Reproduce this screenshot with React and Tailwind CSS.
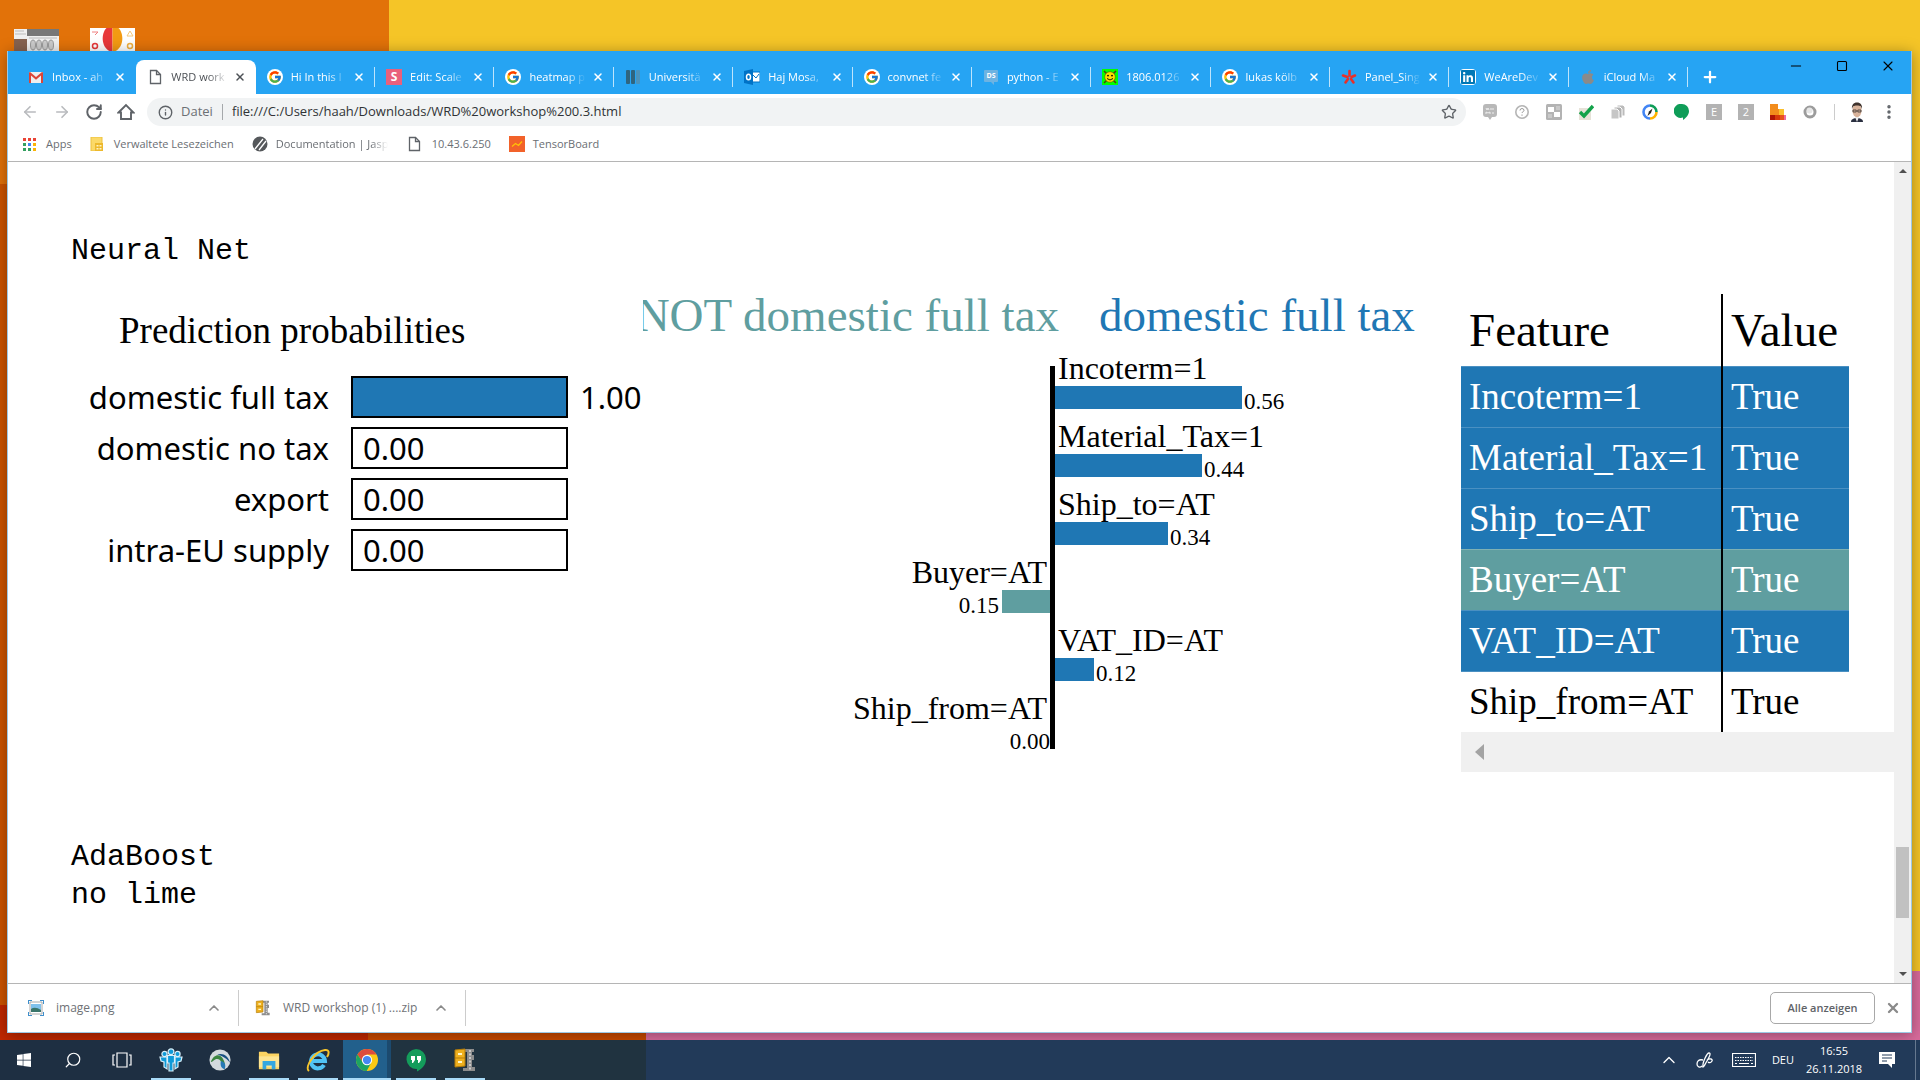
import {
    ArrowLeft,
    ArrowRight,
    ChevronUp,
    Info,
    Minus,
    MoreVertical,
    Plus,
    RotateCw,
    Search,
    Square,
    Star,
    X,
} from 'lucide-react';
import { FcGoogle } from 'react-icons/fc';
import { FaApple, FaLinkedin, FaWindows } from 'react-icons/fa';

const BLUE = '#1f77b4';
const TEAL = '#5f9ea0';

/* ---------- Favicons ---------- */

const PageIcon = () => (
    <svg viewBox="0 0 16 16" className="size-4" fill="none" stroke="#5f6368" strokeWidth="1.3">
        <path d="M3.5 1.5h6l4 4v9h-10z" />
        <path d="M9.5 1.5v4h4" />
    </svg>
);

const GmailIcon = () => (
    <svg viewBox="0 0 16 16" className="size-4">
        <rect x="1" y="3" width="14" height="11" rx="1" fill="#eee" />
        <path d="M1 14V3.5l1-.5 6 5 6-5 1 .5V14h-2V6.5L8 10.8 3 6.5V14z" fill="#db4437" />
    </svg>
);

const GoogleIcon = () => (
    <span className="flex size-4 items-center justify-center rounded-full bg-white">
        <FcGoogle className="size-[14px]" />
    </span>
);

const ScaledIcon = () => (
    <svg viewBox="0 0 16 16" className="size-4">
        <rect width="16" height="16" fill="#e9607c" />
        <text x="8" y="12" textAnchor="middle" fontSize="12" fontWeight="700" fill="#fff" fontFamily="Open Sans, sans-serif">S</text>
    </svg>
);

const UniIcon = () => (
    <svg viewBox="0 0 16 16" className="size-4" fill="#2f6580">
        <rect x="1" y="1" width="4" height="14" rx="1" />
        <rect x="6" y="1" width="4" height="14" rx="1" />
        <rect x="11" y="1" width="4" height="14" rx="1" fill="#4b93bd" />
    </svg>
);

const OutlookIcon = () => (
    <svg viewBox="0 0 16 16" className="size-4">
        <path d="M7 3h9v10H7z" fill="#fff" stroke="#0072c6" />
        <path d="M9 6l3 3 3-4" fill="none" stroke="#0072c6" />
        <path d="M0 2l9-2v16l-9-2z" fill="#0072c6" />
        <ellipse cx="4.5" cy="8" rx="2" ry="2.8" fill="none" stroke="#fff" strokeWidth="1.5" />
    </svg>
);

const StackIcon = () => (
    <svg viewBox="0 0 16 16" className="size-4">
        <path d="M1 2a1 1 0 011-1h12a1 1 0 011 1v10a1 1 0 01-1 1h-3v3l-3-3H2a1 1 0 01-1-1z" fill="#6db3e2" />
        <text x="8" y="9" textAnchor="middle" fontSize="7" fontWeight="700" fill="#fff" fontFamily="Open Sans, sans-serif">DS</text>
    </svg>
);

const ArxivIcon = () => (
    <svg viewBox="0 0 16 16" className="size-4">
        <rect width="16" height="16" fill="#0f0" />
        <path d="M2 2l12 12M14 2L2 14" stroke="#553a10" strokeWidth="1.5" />
        <circle cx="8" cy="8" r="5.3" fill="#fd0" stroke="#650" strokeWidth=".6" />
        <circle cx="6" cy="6.6" r=".9" />
        <circle cx="10" cy="6.6" r=".9" />
        <path d="M5 9.5q3 3 6 0" fill="none" stroke="#000" strokeWidth=".9" />
    </svg>
);

const YelpIcon = () => (
    <svg viewBox="0 0 16 16" className="size-4" stroke="#e8302a" strokeWidth="2.6" strokeLinecap="round">
        <path d="M8.500 2v4.500M2 6.500l4.500 1.500M4.500 13.500l2.500-3.500M10 10l2.500 3.500M10.500 8L14 6.500" />
    </svg>
);

const tabs = [
    { title: 'Inbox - ah', icon: <GmailIcon />, plain: true },
    { title: 'WRD work', icon: <PageIcon />, active: true },
    { title: 'Hi In this l', icon: <GoogleIcon /> },
    { title: 'Edit: Scale', icon: <ScaledIcon /> },
    { title: 'heatmap p', icon: <GoogleIcon /> },
    { title: 'Universitä', icon: <UniIcon /> },
    { title: 'Haj Mosa,', icon: <OutlookIcon /> },
    { title: 'convnet fe', icon: <GoogleIcon /> },
    { title: 'python - E', icon: <StackIcon /> },
    { title: '1806.0126', icon: <ArxivIcon /> },
    { title: 'lukas kölb', icon: <GoogleIcon /> },
    { title: 'Panel_Sing', icon: <YelpIcon /> },
    { title: 'WeAreDev', icon: <FaLinkedin className="size-4 rounded-sm bg-white text-[#0077b5]" /> },
    { title: 'iCloud Ma', icon: <FaApple className="size-4 text-[#8a8a8a]" /> },
];

const Tab = ({ title, icon, active, plain }) => (
    <div
        className={
            active
                ? 'flex min-w-0 flex-1 items-center rounded-t-lg bg-white pl-[11px] text-[#4d5156]'
                : 'flex min-w-0 flex-1 items-center pl-[11px] text-white'
        }
    >
        <span className="shrink-0">{icon}</span>
        <button
            type="button"
            className="ml-2 min-w-0 flex-1 text-left whitespace-nowrap [mask-image:linear-gradient(to_right,black_65%,transparent)]"
        >
            {title}
        </button>
        <button type="button" aria-label={`${title} schließen`} className="ml-1 flex size-4 shrink-0 items-center justify-center">
            <X className="size-3" strokeWidth={3} />
        </button>
        <span className={active || plain ? 'ml-[7px] h-5 w-px shrink-0' : 'ml-[7px] h-5 w-px shrink-0 bg-white/70'} />
    </div>
);

const TabStrip = () => (
    <div className="flex h-[43px] bg-[#26a4f3]">
        <div className="mt-[9px] flex min-w-0 flex-1 pl-[9px] text-[11px]">
            {tabs.map((tab, i) => (
                <Tab key={i} {...tab} />
            ))}
        </div>
        <button type="button" aria-label="Neuer Tab" className="mt-[9px] ml-[13px] text-white">
            <Plus className="size-[18px]" strokeWidth={3} />
        </button>
        <div className="ml-[54px] flex h-[30px] text-black">
            <button type="button" aria-label="Minimieren" className="flex w-[46px] items-center justify-center">
                <Minus className="size-4" strokeWidth={1.5} />
            </button>
            <button type="button" aria-label="Maximieren" className="flex w-[46px] items-center justify-center">
                <Square className="size-3" strokeWidth={2.2} />
            </button>
            <button type="button" aria-label="Schließen" className="flex w-[46px] items-center justify-center">
                <X className="size-4" strokeWidth={1.6} />
            </button>
        </div>
    </div>
);

/* ---------- Barre d'outils ---------- */

const extensions = [
    {
        name: 'WalkMe',
        icon: (
            <>
                <path d="M1 3a3 3 0 013-3h8a3 3 0 013 3v7a3 3 0 01-3 3h-2l-2 3-2-3H4a3 3 0 01-3-3z" fill="#b8b8b8" />
                <path d="M4 4l1 2 1-2 1 2M9 4v2M11 4v2M4 10V8l2 1 2-1v2M10 9h2" fill="none" stroke="#eee" />
            </>
        ),
    },
    {
        name: 'Hilfe',
        icon: (
            <>
                <circle cx="8" cy="8" r="6.2" fill="none" stroke="#b5b5b5" strokeWidth="1.6" />
                <path d="M6 6.5a2 2 0 114 0c0 1.2-2 1.2-2 2.5M8 10.5v1.3" fill="none" stroke="#999" />
            </>
        ),
    },
    {
        name: 'Fenster',
        icon: (
            <>
                <rect width="16" height="16" rx="1.5" fill="#b3b3b3" />
                <path d="M2 3h6v5H2zM8 8h6v5H8z" fill="#fff" />
                <path d="M10 2h4v4h-4zM2 10h4v4H2z" fill="#c8c8c8" />
            </>
        ),
    },
    {
        name: 'Prüfung',
        icon: (
            <>
                <rect x="1" y="4" width="12" height="12" fill="#e6e2d8" />
                <path d="M2 8l4 4L15 2" fill="none" stroke="#13a24a" strokeWidth="3.4" />
            </>
        ),
    },
    {
        name: 'Kopien',
        icon: (
            <>
                <path d="M7 1h6l2 2v9H7z" fill="#bbb" stroke="#fff" />
                <path d="M4 3h6l2 2v9H4z" fill="#b0b0b0" stroke="#fff" />
                <path d="M1 5h6l2 2v8H1z" fill="#c6c6c6" stroke="#fff" />
            </>
        ),
    },
    {
        name: 'Kompass',
        icon: (
            <>
                <path d="M8 1.5A6.5 6.5 0 0114.5 8" fill="none" stroke="#0f9d58" strokeWidth="2.6" />
                <path d="M14.5 8A6.5 6.5 0 018 14.5" fill="none" stroke="#ffb300" strokeWidth="2.6" />
                <path d="M8 14.5a6.5 6.5 0 010-13" fill="none" stroke="#4285f4" strokeWidth="2.6" />
                <path d="M10.5 4.5L9 9l-3.5 3L7 7.5z" fill="#222" />
            </>
        ),
    },
    { name: 'Hangouts', icon: <path d="M8 0a7 7 0 017 7c0 4-3 7-6 9v-2.5A7 7 0 118 0z" fill="#0f9d58" /> },
    {
        name: 'Erweiterung E',
        icon: (
            <>
                <rect width="16" height="16" fill="#b3b3b3" />
                <text x="8" y="12" textAnchor="middle" fontSize="11" fill="#fff">E</text>
            </>
        ),
    },
    {
        name: 'Erweiterung 2',
        icon: (
            <>
                <rect width="16" height="16" fill="#b3b3b3" />
                <text x="8" y="12" textAnchor="middle" fontSize="11" fill="#fff">2</text>
            </>
        ),
    },
    {
        name: 'Treppe',
        icon: (
            <>
                <path d="M0 0h8v5h6v6h2v5H0z" fill="#f28c1c" />
                <path d="M9 5h5v6H9z" fill="#fbc02d" />
                <path d="M0 11h5v5H0z" fill="#b01405" />
                <path d="M5 11h5v5H5z" fill="#d8390b" />
                <path d="M10 11h4v5h-4z" fill="#e8531a" />
                <path d="M14 11h2v5h-2z" fill="#ee6aa0" />
            </>
        ),
    },
    {
        name: 'Kreis',
        icon: (
            <>
                <circle cx="8" cy="8" r="5" fill="none" stroke="#9c9c9c" strokeWidth="3" />
                <circle cx="7.5" cy="6.500" r="3" fill="#e6e6e6" />
            </>
        ),
    },
];

const Toolbar = () => (
    <div className="flex h-9 items-center bg-white pr-[13px] pl-[13px]">
        <button type="button" aria-label="Zurück" className="mr-[14px] text-[#b9bbbe]">
            <ArrowLeft className="size-[18px]" strokeWidth={2.2} />
        </button>
        <button type="button" aria-label="Vorwärts" className="mr-[14px] text-[#b9bbbe]">
            <ArrowRight className="size-[18px]" strokeWidth={2.2} />
        </button>
        <button type="button" aria-label="Neu laden" className="mr-[14px] text-[#5f6368]">
            <RotateCw className="size-[18px]" strokeWidth={2.6} />
        </button>
        <button type="button" aria-label="Startseite" className="mr-3 text-[#5f6368]">
            <svg viewBox="0 0 18 18" className="size-[18px]" fill="none" stroke="currentColor" strokeWidth="1.9">
                <path d="M1.5 9.5L9 2l7.5 7.5H14V16H4V9.5z" />
            </svg>
        </button>
        <div className="flex h-7 min-w-0 flex-1 items-center rounded-full bg-[#f1f3f4] pr-[9px] pl-[11px]">
            <Info className="size-[15px] text-[#5f6368]" strokeWidth={2.2} />
            <span className="ml-2 text-[13px] text-[#6c7074]">Datei</span>
            <span className="mx-[9px] h-4 w-px bg-[#a5a8ab]" />
            <input
                aria-label="Adresse"
                defaultValue="file:///C:/Users/haah/Downloads/WRD%20workshop%200.3.html"
                className="min-w-0 flex-1 bg-transparent text-[13px] text-[#303336] outline-none"
            />
            <button type="button" aria-label="Lesezeichen setzen" className="text-[#5f6368]">
                <Star className="size-4" strokeWidth={2} />
            </button>
        </div>
        <div className="ml-4 flex gap-4">
            {extensions.map(({ name, icon }) => (
                <button key={name} type="button" aria-label={name}>
                    <svg viewBox="0 0 16 16" className="size-4">{icon}</svg>
                </button>
            ))}
        </div>
        <span className="ml-4 h-4 w-px bg-[#ccc]" />
        <button type="button" aria-label="Profil" className="ml-3">
            <svg viewBox="0 0 20 20" className="size-5">
                <path d="M4 20c0-3 3-4 6-4s6 1 6 4z" fill="#2a2f40" />
                <path d="M8 15h4l-2 5z" fill="#eee" />
                <ellipse cx="10" cy="8.5" rx="4.6" ry="6.8" fill="#d9b39b" />
                <path d="M5 7c-.5-4 1.5-6.500 5-6.500S15.500 3 15 7c-.6-2.500-1.500-3.500-5-3.500S5.600 4.500 5 7z" fill="#3f332d" />
                <path d="M6 8h3.2v2H6zM10.8 8H14v2h-3.2z" fill="none" stroke="#222" strokeWidth=".7" />
            </svg>
        </button>
        <button type="button" aria-label="Menü" className="ml-[13px] text-[#5f6368]">
            <MoreVertical className="size-[18px]" strokeWidth={2.6} />
        </button>
    </div>
);

const Bookmarks = () => (
    <nav className="flex h-8 items-center border-b border-[#b5b5b5] bg-white pb-[3px] pl-[15px] text-[11px] text-[#6a6e73]">
        <a href="#apps" className="flex items-center gap-[10px]">
            <svg viewBox="0 0 13 13" className="size-[13px]">
                <path d="M0 0h3v3H0zM5 0h3v3H5zM10 0h3v3h-3z" fill="#ea4335" />
                <path d="M0 5h3v3H0zM0 10h3v3H0zM5 10h3v3H5z" fill="#34a060" />
                <path d="M5 5h3v3H5z" fill="#4285f4" />
                <path d="M10 5h3v3h-3zM10 10h3v3h-3z" fill="#fbb305" />
            </svg>
            Apps
        </a>
        <a href="#verwaltet" className="ml-[18px] flex items-center gap-[10px]">
            <svg viewBox="0 0 14 14" className="size-[14px]">
                <path d="M1 0h11v14H1z" fill="#fbd968" stroke="#edc13c" />
                <path d="M5 6h8v8H5z" fill="#edb92c" />
                <path d="M6.5 8h2v1.5h-2zM9.5 8h2v1.5h-2zM6.5 11h2v1.5h-2zM9.5 11h2v1.5h-2z" fill="#fff3c4" />
            </svg>
            Verwaltete Lesezeichen
        </a>
        <a href="#docs" className="ml-[18px] flex items-center gap-2">
            <svg viewBox="0 0 16 16" className="size-4">
                <circle cx="8" cy="8" r="7.5" fill="#55585b" />
                <path d="M3 13L11 3M7 14l7-9" stroke="#fff" strokeWidth="1.3" />
            </svg>
            <span className="w-28 whitespace-nowrap [mask-image:linear-gradient(to_right,black_85%,transparent)]">
                Documentation | Jasp
            </span>
        </a>
        <a href="#ip" className="ml-[18px] flex items-center gap-[10px]">
            <PageIcon />
            10.43.6.250
        </a>
        <a href="#tensorboard" className="ml-[18px] flex items-center gap-2">
            <svg viewBox="0 0 16 16" className="size-4">
                <rect width="16" height="16" fill="#f2622a" />
                <path d="M3 10.5l3.5-3 3 2L13 5.5" fill="none" stroke="#ffc107" strokeWidth="1.3" />
            </svg>
            TensorBoard
        </a>
    </nav>
);

/* ---------- Contenu de la page ---------- */

const probabilities = [
    { label: 'domestic full tax', value: 1 },
    { label: 'domestic no tax', value: 0 },
    { label: 'export', value: 0 },
    { label: 'intra-EU supply', value: 0 },
];

const features = [
    { name: 'Incoterm=1', weight: 0.56 },
    { name: 'Material_Tax=1', weight: 0.44 },
    { name: 'Ship_to=AT', weight: 0.34 },
    { name: 'Buyer=AT', weight: -0.15 },
    { name: 'VAT_ID=AT', weight: 0.12 },
    { name: 'Ship_from=AT', weight: -0.001 },
];

const Probabilities = () => (
    <div className="w-[572px] shrink-0 pt-4 text-black">
        <h2 className="pl-12 font-['Liberation_Serif',serif] text-[37px] leading-[42px]">Prediction probabilities</h2>
        <div className="mt-6 flex flex-col gap-[9px] font-['Noto_Sans',sans-serif] text-[31px] leading-[42px]">
            {probabilities.map(({ label, value }) => (
                <div key={label} className="flex h-[42px] items-center">
                    <span className="w-[258px] text-right whitespace-nowrap">{label}</span>
                    <div className="ml-[22px] flex h-[42px] w-[217px] items-center border-2 border-black">
                        {value > 0 ? (
                            <div className="h-full bg-[#1f77b4]" style={{ width: `${value * 100}%` }} />
                        ) : (
                            <span className="pl-[10px]">{value.toFixed(2)}</span>
                        )}
                    </div>
                    {value > 0 && <span className="ml-3">{value.toFixed(2)}</span>}
                </div>
            ))}
        </div>
    </div>
);

const FeatureChart = () => (
    <svg
        width="818"
        height="477"
        viewBox="0 0 818 477"
        className="shrink-0 overflow-hidden font-['Liberation_Serif',serif]"
    >
        <text x="416" y="37" textAnchor="end" fontSize="47" fill={TEAL}>NOT domestic full tax</text>
        <text x="456" y="37" fontSize="47" fill={BLUE}>domestic full tax</text>
        {features.map(({ name, weight }, i) => {
            const positive = weight > 0;
            const width = Math.round(Math.abs(weight) * 338);
            const y = i * 68;
            return (
                <g key={name}>
                    <rect
                        x={positive ? 410 : 410 - width}
                        y={y + 92}
                        width={width}
                        height="23"
                        fill={positive ? BLUE : TEAL}
                    />
                    <text x={positive ? 415 : 404} y={y + 85} textAnchor={positive ? 'start' : 'end'} fontSize="32">
                        {name}
                    </text>
                    <text
                        x={positive ? 412 + width : 407 - width}
                        y={y + 115}
                        textAnchor={positive ? 'start' : 'end'}
                        fontSize="23"
                    >
                        {Math.abs(weight).toFixed(2)}
                    </text>
                </g>
            );
        })}
        <path d="M409.5 72V455" stroke="#000" strokeWidth="5" />
    </svg>
);

const rowColor = (weight) => {
    if (weight > 0) return 'h-[61px] border-t border-[#4a90c2] bg-[#1f77b4] text-white';
    if (weight < -0.01) return 'h-[61px] border-t border-[#7fb1b3] bg-[#5f9ea0] text-white';
    return 'h-[61px] border-t border-[#4a90c2]';
};

const FeatureTable = () => (
    <div className="min-w-0 flex-1 overflow-hidden font-['Liberation_Serif',serif]">
        <table className="w-[388px] table-fixed border-collapse text-left text-[37px] leading-[42px] text-black">
            <thead>
                <tr className="h-[72px] text-[47px]">
                    <th className="w-[261px] border-r-2 border-black pl-2 font-normal">Feature</th>
                    <th className="pl-2 font-normal">Value</th>
                </tr>
            </thead>
            <tbody>
                {features.map(({ name, weight }) => (
                    <tr key={name} className={rowColor(weight)}>
                        <td className="border-r-2 border-r-black pl-2">{name}</td>
                        <td className="pl-2">True</td>
                    </tr>
                ))}
            </tbody>
        </table>
        <div className="flex h-10 items-center bg-[#f0f0f0] pl-[14px]">
            <svg viewBox="0 0 9 16" className="h-4 w-[9px]">
                <path d="M9 0v16L0 8z" fill="#a3a3a3" />
            </svg>
        </div>
    </div>
);

const Scrollbar = () => (
    <div className="flex w-[17px] shrink-0 flex-col items-center bg-[#f0f0f0] py-[7px]">
        <svg viewBox="0 0 8 4" className="h-1 w-2">
            <path d="M0 4l4-4 4 4z" fill="#505050" />
        </svg>
        <div className="grow-[674]" />
        <div className="h-[71px] w-[13px] bg-[#c1c1c1]" />
        <div className="grow-[54]" />
        <svg viewBox="0 0 8 4" className="h-1 w-2">
            <path d="M0 0l4 4 4-4z" fill="#505050" />
        </svg>
    </div>
);

const Notebook = () => (
    <div className="flex flex-1 bg-white">
        <main className="min-w-0 flex-1 pt-[70px] pb-16 pl-[63px] font-['Liberation_Mono',monospace] text-[30px] leading-[38px] text-black">
            <p>Neural Net</p>
            <section className="mt-6 flex">
                <Probabilities />
                <FeatureChart />
                <FeatureTable />
            </section>
            <p className="mt-[66px]">AdaBoost</p>
            <p>no lime</p>
        </main>
        <Scrollbar />
    </div>
);

/* ---------- Téléchargements ---------- */

const ZipIcon = ({ className }) => (
    <svg viewBox="0 0 24 24" className={className}>
        <path d="M12 1h9v3h-2v3h2v5h-2v7h3v4H10v-3h4V4h-2z" fill="#8d8d8d" />
        <path d="M17 2v20" stroke="#ddd" strokeDasharray="2 1.5" strokeWidth="1.5" />
        <path d="M2 2l10-1v17l-10 1z" fill="#eeb01e" stroke="#b57d0a" />
        <path d="M2 10h10" stroke="#b57d0a" />
        <path d="M5 5h4v2H5zM5 13h4v2H5z" fill="#fff6c8" />
    </svg>
);

const Downloads = () => (
    <footer className="flex h-[49px] items-center border-t border-[#b5b5b5] bg-white text-xs text-[#6f7276]">
        <div className="flex w-[230px] items-center pr-4 pl-5">
            <svg viewBox="0 0 16 16" className="size-4">
                <path d="M2 2h12v12H2z" fill="#fff" stroke="#aaa" />
                <path d="M3 4h10v8H3z" fill="#7fc1ec" />
                <path d="M3 9q4-3 10 1v2H3z" fill="#39756a" />
                <path d="M0 4V0h4M12 0h4v4M16 12v4h-4M4 16H0v-4" fill="none" stroke="#3f8fcc" strokeWidth="2" />
            </svg>
            <a href="#image" className="ml-3 flex-1">image.png</a>
            <button type="button" aria-label="Optionen für image.png">
                <ChevronUp className="size-4 text-[#8a8a8a]" strokeWidth={2.5} />
            </button>
        </div>
        <span className="h-9 w-px bg-[#ccc]" />
        <div className="flex w-[226px] items-center px-4">
            <ZipIcon className="size-4" />
            <a href="#zip" className="ml-3 flex-1 whitespace-nowrap">WRD workshop (1) ....zip</a>
            <button type="button" aria-label="Optionen für WRD workshop">
                <ChevronUp className="size-4 text-[#8a8a8a]" strokeWidth={2.5} />
            </button>
        </div>
        <span className="h-9 w-px bg-[#ccc]" />
        <button
            type="button"
            className="ml-auto h-8 w-[105px] rounded-[5px] border border-[#a8a8a8] text-[11px] font-semibold text-[#5f6368]"
        >
            Alle anzeigen
        </button>
        <button type="button" aria-label="Leiste schließen" className="mx-[10px] text-[#8a8a8a]">
            <X className="size-4" strokeWidth={3.5} />
        </button>
    </footer>
);

/* ---------- Bureau et barre des tâches ---------- */

const DesktopFiles = () => (
    <div className="flex h-[51px] items-end gap-[31px] pl-[14px]">
        <svg viewBox="0 0 45 22" className="h-[22px] w-[45px]">
            <rect width="45" height="22" fill="#f0f0f0" />
            <path d="M13 0h32v7H13z" fill="#777" />
            <path d="M0 10h13v12H0z" fill="#86624f" />
            <path d="M1 2h9M1 5h11M15 9h28" stroke="#bbb" />
            <g fill="#ccc" stroke="#999">
                <ellipse cx="19" cy="16" rx="2.5" ry="5" />
                <ellipse cx="25" cy="16" rx="2.5" ry="5" />
                <ellipse cx="31" cy="16" rx="2.5" ry="5" />
                <ellipse cx="37" cy="16" rx="2.5" ry="5" />
            </g>
        </svg>
        <svg viewBox="0 0 45 23" className="h-[23px] w-[45px]">
            <rect width="45" height="23" fill="#fff" />
            <path d="M22.5 0v23h-3C11 19 11 5 16.500 0z" fill="#e8383a" />
            <path d="M22.5 0v23h3C34 19 34 5 28.500 0z" fill="#f39a12" />
            <circle cx="5" cy="18" r="2.5" fill="none" stroke="#e8383a" strokeWidth="1.5" />
            <circle cx="40" cy="18" r="2.5" fill="none" stroke="#f0b040" strokeWidth="1.5" />
            <path d="M2 4h6l-3 3" fill="none" stroke="#ee8080" />
            <path d="M37 8l3-5 3 5z" fill="none" stroke="#f5c878" />
        </svg>
    </div>
);

const apps = [
    { name: 'Start', icon: <FaWindows className="size-4 text-white" /> },
    { name: 'Suche', icon: <Search className="size-[18px] -scale-x-100 text-white" strokeWidth={1.6} /> },
    {
        name: 'Taskansicht',
        icon: (
            <svg viewBox="0 0 20 16" className="h-4 w-5" fill="none" stroke="#fff" strokeWidth="1.2">
                <path d="M5 1h10v14H5zM3 3H1v10h2M17 3h2v10h-2" />
            </svg>
        ),
    },
    {
        name: 'Team',
        open: true,
        icon: (
            <svg viewBox="0 0 24 24" className="size-6">
                <g fill="#0f9ad8" stroke="#d8f0fb" strokeWidth="1.2">
                    <path d="M1 9h7v12l-3-2v-5l-3-1zM23 9h-7v12l3-2v-5l3-1z" />
                    <circle cx="5.5" cy="6" r="2.6" />
                    <circle cx="18.5" cy="6" r="2.6" />
                    <path d="M8.5 7.500h7V15H14v8h-4v-8H8.500z" />
                    <circle cx="12" cy="3.800" r="2.900" />
                </g>
            </svg>
        ),
    },
    {
        name: 'AnyConnect',
        icon: (
            <svg viewBox="0 0 24 24" className="size-[22px]">
                <circle cx="12" cy="12" r="11.5" fill="#d4dade" />
                <path d="M2 14c3-8 9-9 12-5s4 7 3 13c-3-6-4-11-8-11s-5 4-7 3z" fill="#3b8541" />
                <path d="M9 6c6-2 12 1 14 9-3-4-7-7-14-9z" fill="#174f80" />
                <path d="M13 13c4 1 6 4 4 9-4-1-5-5-4-9z" fill="#2779b5" />
            </svg>
        ),
    },
    {
        name: 'Explorer',
        open: true,
        icon: (
            <svg viewBox="0 0 24 24" className="size-[22px]">
                <path d="M1 3h8l2 2h12v17H1z" fill="#fcd462" />
                <path d="M1 8h22v12H1z" fill="#fee592" />
                <path d="M5 22v-9h14v9h-4v-4H9v4z" fill="#35a7e0" />
            </svg>
        ),
    },
    {
        name: 'Internet Explorer',
        open: true,
        icon: (
            <svg viewBox="0 0 24 24" className="size-6" fill="none">
                <path d="M6 13h13a7 7 0 10-1 4" stroke="#51c3f5" strokeWidth="4" />
                <path d="M3 23C-2 19 9 3 19 2c5-.5 4 4 2 7" stroke="#f7c52b" strokeWidth="2" />
            </svg>
        ),
    },
    {
        name: 'Chrome',
        open: true,
        active: true,
        icon: (
            <svg viewBox="0 0 24 24" className="size-[22px]">
                <circle cx="12" cy="12" r="12" fill="#fbc914" />
                <path d="M12 6h10.4A12 12 0 001.6 6L7 14z" fill="#dd4b3e" />
                <path d="M1.6 6a12 12 0 0010 18l5-9-5 2-4.6-3z" fill="#1da462" />
                <circle cx="12" cy="12" r="5.6" fill="#fff" />
                <circle cx="12" cy="12" r="4.5" fill="#4587f3" />
            </svg>
        ),
    },
    {
        name: 'Hangouts',
        open: true,
        icon: (
            <svg viewBox="0 0 24 24" className="size-6">
                <path d="M12 1a10 10 0 0110 10c0 6-4 10-9 12.5V21A10 10 0 1112 1z" fill="#149c5b" />
                <path d="M7 8h4v4l-2 3H8v-3H7zM13 8h4v4l-2 3h-1v-3h-1z" fill="#fff" />
            </svg>
        ),
    },
    { name: '7-Zip', open: true, icon: <ZipIcon className="size-6" /> },
];

const appClass = ({ open, active }) => {
    if (active) {
        return 'flex w-12 items-center justify-center border-b-2 border-[#a9dbf8] bg-[linear-gradient(to_right,#22608c_44px,#1c4a6e_44px)] pt-0.5';
    }
    if (open) return 'mx-1 flex w-10 items-center justify-center border-b-2 border-[#a9dbf8] pt-0.5';
    return 'flex w-12 items-center justify-center';
};

const Taskbar = () => (
    <div className="flex h-10 bg-[linear-gradient(to_right,#1e2f42_368px,#203340_368px,#203340_646px,#223a59_646px)] text-[11px] text-white">
        <div className="flex gap-px">
            {apps.map((app) => (
                <button key={app.name} type="button" aria-label={app.name} className={appClass(app)}>
                    {app.icon}
                </button>
            ))}
        </div>
        <div className="ml-auto flex items-center">
            <button type="button" aria-label="Ausgeblendete Symbole">
                <ChevronUp className="size-5" strokeWidth={1.6} />
            </button>
            <svg viewBox="0 0 18 18" className="ml-[17px] size-[18px]" fill="none" stroke="#fff" strokeWidth="1.3">
                <path d="M7 16C6 12 11 2 13 2s1 3-2 8-3 6-4 6zM7 9c-4-1-6 1-6 4s3 4 5 2M11 9c3-2 6-1 5 1s-3 2-4 1" />
            </svg>
            <svg viewBox="0 0 24 14" className="ml-[18px] h-[14px] w-6" fill="none" stroke="#fff">
                <path d="M.5.5h23v13H.5z" strokeWidth="1.2" />
                <path d="M3 4.5h18M3 7.5h18" strokeDasharray="1.5 1" />
                <path d="M3 10.5h2M7 10.5h10M19 10.5h2" />
            </svg>
            <span className="ml-4">DEU</span>
            <div className="ml-3 w-14 text-center leading-[18px]">
                <div>16:55</div>
                <div>26.11.2018</div>
            </div>
            <svg viewBox="0 0 16 16" className="ml-[17px] size-4">
                <path d="M0 0h16v12h-3v4l-4-4H0z" fill="#fff" />
                <path d="M3 3h10M3 6h10M3 9h5" stroke="#223a59" />
            </svg>
            <span className="mr-1 ml-5 h-10 w-px bg-[#66788f]" />
        </div>
    </div>
);

const App = () => (
    <div className="flex min-h-screen flex-col font-['Open_Sans',sans-serif] [background:linear-gradient(#d96b9c,#d96b9c)_646px_971px_no-repeat,linear-gradient(#c84a00,#c84a00)_368px_1005px_no-repeat,linear-gradient(#c02800,#c02800)_0_1005px_no-repeat,linear-gradient(#f5c527,#f5c527)_389px_0_no-repeat,linear-gradient(#cc5400,#cc5400)_0_184px_no-repeat,#e27209]">
        <DesktopFiles />
        <div className="mr-2 mb-[7px] ml-[7px] flex flex-1 flex-col border-x border-b border-[#9cc8e4] shadow-[0_2px_14px_rgba(0,0,0,0.35)]">
            <TabStrip />
            <Toolbar />
            <Bookmarks />
            <Notebook />
            <Downloads />
        </div>
        <Taskbar />
    </div>
);

export default App;
